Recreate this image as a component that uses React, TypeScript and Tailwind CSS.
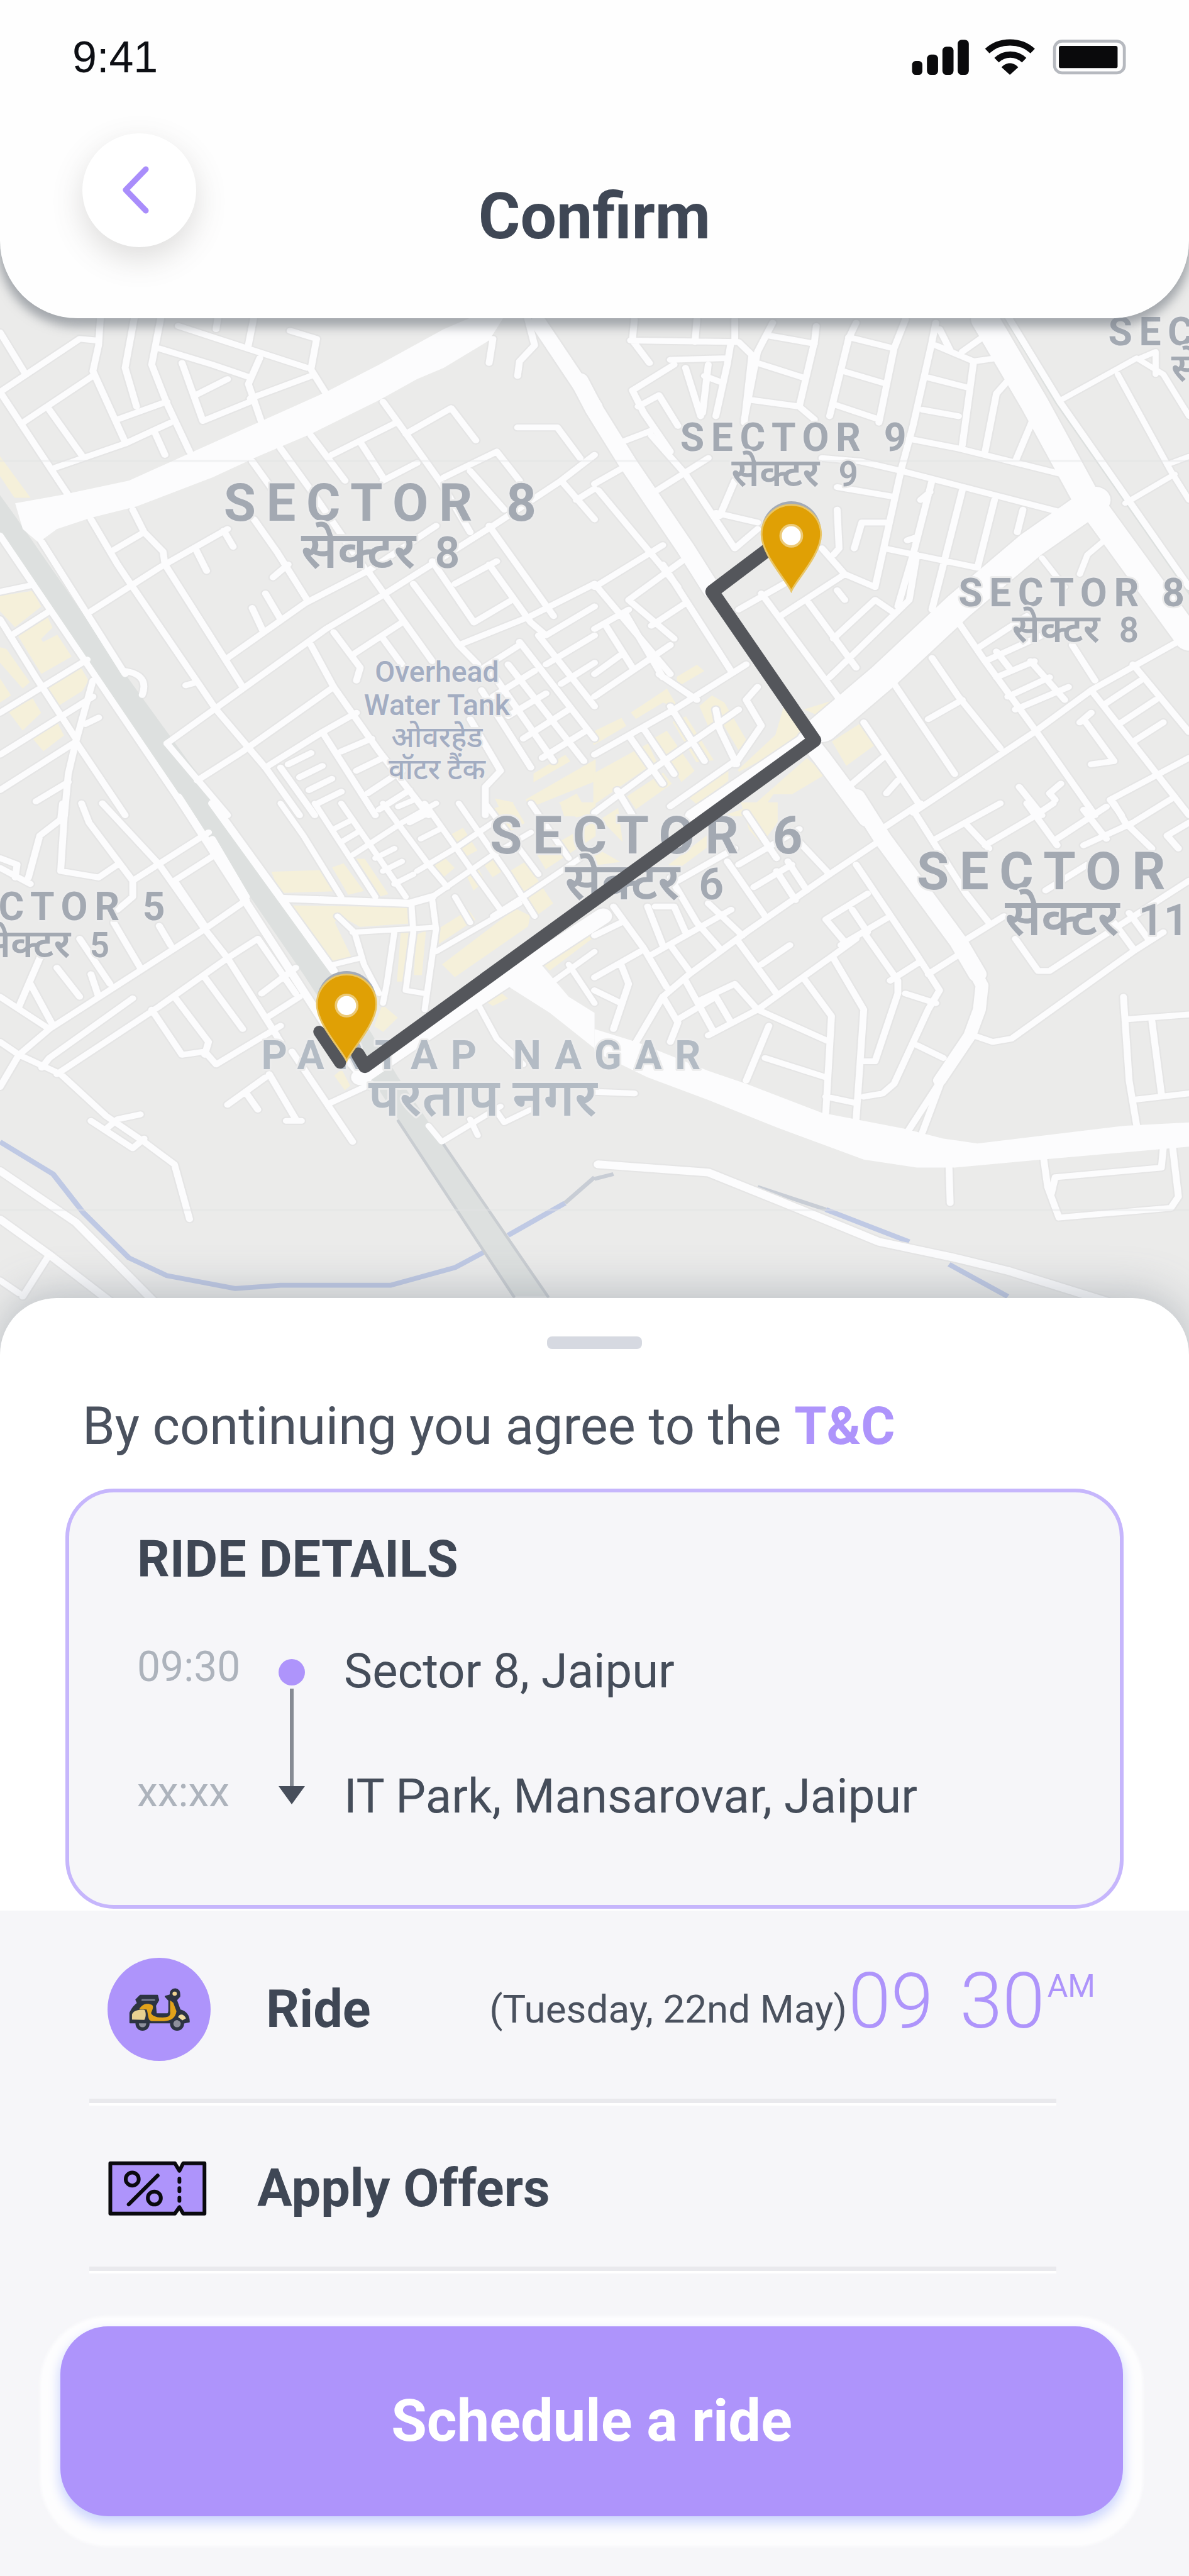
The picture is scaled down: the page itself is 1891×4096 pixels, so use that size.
type Road = { w: number; d: string };
type Tile = {
  id: string;
  x: number;
  y: number;
  parks: string;
  rail?: string;
  railEdges?: string;
  highways: string;
  roads: Road[];
  river?: string;
  stream?: string;
};

/* Each tile covers 1000 x 850 map units and is drawn on a 1568 x 1568 grid. */
const tiles: Tile[] = [
  {
    id: "nw",
    x: 0,
    y: 520,
    parks:
      "M0 460L75 580L40 580L0 510Z M0 890L85 875L105 920L40 980L0 930Z M50 1010L125 960L135 985L105 1020L112 1035L150 1012L185 1075L110 1125Z M0 1050L15 1055L75 1155L60 1170L0 1090Z M105 1175L210 1110L230 1150L215 1180L140 1235Z M25 1245L85 1210L105 1250L60 1300Z M90 1330L150 1285L165 1320L115 1365Z M0 1150L25 1195L0 1215Z M1390 1520L1568 1400L1568 1460L1400 1540Z M1410 1440L1490 1385L1500 1400L1410 1460Z M1310 1520L1350 1530L1330 1568Z M1480 1530L1520 1505L1550 1568L1490 1568Z",
    rail: "M0 575L40 640L330 1130L600 1568L510 1568L20 720L0 690Z",
    highways:
      "M40 600L160 575L340 530L500 445L680 350L860 255L1000 170L1170 60L1250 20L1330 20L1290 95L1170 180L1100 215L1000 280L820 385L680 455L560 520L360 610L240 645L150 680L110 715L125 745L60 680Z",
    roads: [
      { w: 44, d: "M1420 40L1568 300" },
      {
        w: 20,
        d: "M0 700L500 1568 M110 720L330 1130 M0 70L65 195 M0 255L210 90L255 95 M0 255L180 575 M60 350L245 205 M265 20L260 110L245 190L330 410 M130 310L215 450 M145 490L330 415L450 350 M355 20L330 180L360 300 M425 20L400 170L440 290L500 440 M310 340L440 285 M410 385L435 450 M420 120L560 170L660 210 M480 165L535 345L660 285 M515 265L600 215 M470 50L600 100L810 180 M575 20L570 60 M670 20L655 110 M765 65L835 90L820 185L860 260 M685 150L655 230L690 350 M660 275L820 205 M1300 90L1290 165 M1365 205L1370 160L1410 110L1390 20",
      },
      {
        w: 20,
        d: "M1365 365L1470 365L1530 460 M1010 285L1050 350L1165 540L1240 690 M875 450L1045 350 M820 390L910 530 M740 430L820 560L960 800 M665 470L720 560 M1070 385L1190 305L1255 405 M950 410L1010 520 M1010 530L1100 475 M1170 520L1310 440L1370 530 M1240 500L1330 620 M1568 450L1480 530L1300 670L1010 885L860 990L635 1180L440 1345 M1150 670L970 810L805 910L600 1080 M970 810L1140 1090 M240 650L310 790L350 860L570 1240L700 1420L790 1568 M350 620L380 690L430 750L435 790L640 1170 M300 745L380 690 M240 935L420 800L600 680 M515 740L545 810 M590 685L615 735 M670 650L730 750L810 900 M720 830L760 790 M700 880L740 960 M665 925L695 1000 M490 1165L520 1155 M520 1460L640 1370L880 1170",
      },
      {
        w: 20,
        d: "M820 1040L880 1170L1000 1370L1130 1568 M880 1000L950 1110L940 1150 M930 1070L1060 970 M1010 1020L1060 1100 M1090 850L1210 1040L1260 1100 M1140 780L1250 970 M1200 850L1310 780 M1290 670L1460 950 M1290 790L1400 970 M1210 1040L1400 950L1568 850 M1250 970L1350 900 M1480 530L1568 650 M1520 590L1568 555 M1400 970L1440 1010L1568 920 M1370 1030L1568 1330 M1420 1010L1568 1230 M1250 1130L1370 1040 M1440 1100L1568 1010 M1480 1160L1568 1095 M1340 1100L1540 1400 M1300 1130L1460 1400 M1270 1180L1400 1420 M1300 1200L1410 1120 M1340 1260L1440 1190 M1380 1330L1500 1240 M1430 1390L1540 1310 M1280 1568L1280 1480L1320 1430L1240 1270 M700 1420L850 1310L940 1250 M850 1310L990 1568 M740 1420L830 1568 M760 1410L820 1375 M790 1450L850 1415 M815 1490L875 1455 M840 1530L900 1495 M900 1370L980 1330 M940 1430L1010 1390 M970 1500L1060 1430 M1000 1550L1080 1490",
      },
      {
        w: 20,
        d: "M0 875L80 855 M0 960L100 1150L200 1330 M0 1250L230 1085 M30 1010L130 935 M0 1380L245 1200 M0 1490L200 1340 M245 1150L200 1340L180 1440L170 1568 M200 1340L330 1568 M95 1525L180 1465 M225 1285L260 1265 M325 1120Q395 1130 375 1195 M440 1345L600 1568",
      },
    ],
  },
  {
    id: "ne",
    x: 1000,
    y: 520,
    parks:
      "M630 1340L710 1280L735 1350L665 1410Z M0 1440L140 1350L160 1400L0 1530Z M380 1430L480 1320L500 1240L545 1310L520 1345Z M560 1240L630 1215L600 1260Z M90 1510L180 1440L200 1470L110 1545Z M280 1230L310 1200L340 1220L400 1340L380 1360L340 1280L310 1310Z M220 1140L270 1105L285 1120L220 1165Z M100 1250L190 1180L215 1230L180 1215L110 1265Z M210 1280L240 1265L310 1395L270 1400Z M160 1330L190 1310L260 1430L230 1460Z M0 1310L70 1270L80 1290L0 1345Z M240 1500L350 1420L350 1460L270 1530Z M420 1540L560 1395L605 1440L520 1500L470 1500L430 1568L350 1568Z",
    rail: "M1078 20L1100 20L1240 290L1568 850L1568 885L1215 290Z",
    highways: "",
    roads: [
      { w: 50, d: "M-40 220L0 310L90 480L240 740L310 870 M560 1330L600 1390L720 1580" },
      { w: 76, d: "M1030 30L1160 290L1290 570L1568 1020" },
      { w: 84, d: "M1320 590L1150 730L960 920L760 1140L600 1300" },
      { w: 44, d: "M600 1300L260 1570" },
      {
        w: 20,
        d: "M1090 20L1230 290L1568 860 M95 95L380 100L415 140L395 350 M105 30L100 95L145 165 M200 155L350 150 M360 100L350 170L320 330 M210 170L100 250L130 320L200 440 M240 180L280 330 M300 170L285 320 M290 205L335 225 M115 300L170 265L220 360 M270 30L265 100 M370 30L370 100 M470 40L430 130L395 340 M585 50L580 100L540 300 M690 40L670 90L620 330 M820 30L790 120L750 350 M900 40L890 100L840 360L810 490L740 860 M460 80L580 105 M430 165L550 210 M415 280L540 300L580 340 M670 85L790 120 M655 190L770 230 M635 295L750 340 M900 110L1000 160L1060 150 M910 60L940 130 M970 130L1030 80 M880 210L980 240 M865 310L960 330 M1000 160L970 420 M1090 220L1060 260L1030 440 M1160 330L1110 470 M830 400L960 430L1250 515 M600 460L700 470L810 500L1220 625 M640 550L790 580",
      },
      {
        w: 20,
        d: "M885 565L860 590 M890 530L840 760L800 920 M970 560L890 930 M1055 590L1010 800 M1130 620L1115 690 M765 740L1010 800 M640 620L645 740L630 760 M685 740L705 660L770 660 M825 715L850 705 M0 540L90 480 M50 420L150 375 M150 390L240 510L370 740 M165 560L300 460 M320 630L430 660 M330 640L370 530 M370 740L430 680 M490 950L660 820L740 860 M600 740L660 820 M380 930L500 850 M440 880L660 1230 M565 910L690 1110 M620 1140L830 900L850 760 M740 900L790 940 M630 1020L740 900 M640 870L660 900 M0 860L180 730 M10 560L180 800L220 860 M0 850L200 1130 M90 900L230 780 M90 900L210 1020 M150 980L240 910 M180 790L360 1120 M0 990L90 930 M30 980L100 1110 M80 940L180 1140 M0 1130L70 1070 M0 1200L200 1040 M0 1380L210 1240L400 1100 M170 1130L270 1210 M200 1230L290 1400 M90 1320L180 1470 M0 1560L160 1420L380 1240 M430 1170L400 1210L440 1290L370 1410 M320 1240L330 1300L375 1410 M130 1300L210 1440 M60 1490L100 1568 M370 1400L200 1540",
      },
      {
        w: 20,
        d: "M960 970L1030 1090L1160 1300L1320 1568 M890 1080L960 1200L1070 1360 M790 1160L950 1440 M880 1270L970 1210 M840 1560L1160 1310L1310 1180L1568 1010 M680 1470L760 1390 M710 1280L860 1540 M770 1500L800 1460 M1010 1050L1140 950 M1030 1090L1180 1010 M1060 1140L1160 1090 M1090 1200L1200 1140 M1110 1240L1250 1170 M1060 1060L1100 1120 M1150 1090L1240 1210 M1260 1040L1320 1150 M1310 1180L1568 1568 M1420 1100L1568 1310 M1350 1220L1440 1150 M1390 1280L1480 1210 M1420 1340L1500 1280 M1290 1270L1370 1400L1310 1410 M1280 1280L1310 1250 M1120 1480L1180 1568 M1230 1470L1200 1500L1215 1520 M1360 1520L1568 1390 M1360 1520L1390 1568",
      },
      {
        w: 18,
        d: "M1230 280L1430 150L1500 200L1568 330 M1380 200L1520 500L1568 590 M1400 600L1530 510 M1440 150L1480 130L1480 200 M1510 480L1568 455 M1180 770L1240 860 M1350 710L1300 760L1280 820",
      },
    ],
  },
  {
    id: "sw",
    x: 0,
    y: 1350,
    parks:
      "M720 215L845 210L875 270L740 275Z M775 320L1080 325L1075 370L950 380L890 340L880 370L925 480L880 500Z M880 200L905 190L955 270L920 280Z M1170 500L1360 330L1395 350L1390 380L1200 535Z M1160 390L1235 335L1250 360L1160 430Z M1350 210L1385 185L1455 310L1420 340Z M1190 100L1220 80L1255 145L1215 170Z M1060 400L1075 400L1060 550L1050 550Z M1100 410L1120 400L1110 530L1095 530Z M1150 195L1170 170L1195 200L1170 225Z M1230 215L1255 195L1275 240L1250 265Z M1280 190L1300 170L1320 210L1300 225Z M945 175L960 175L1020 280L1005 285Z M990 690L1010 630L1045 665L1010 705Z M1420 160L1568 60L1568 100L1440 200Z M1265 600L1310 580L1335 605L1300 625Z M885 845L900 830L920 875L910 885Z M1420 480L1568 370L1568 410L1450 515Z M1300 20L1350 0L1380 60L1350 80Z M1480 0L1568 0L1568 30L1520 40Z",
    rail: "M490 0L555 0L880 520L1050 850L1160 1040L1445 1530L1350 1530L1050 980L800 530Z",
    railEdges: "M1050 985L1355 1530 M1165 1050L1445 1530",
    highways: "M1330 560L1340 530L1420 490L1500 600L1568 650L1568 760L1450 650Z",
    roads: [
      { w: 50, d: "M950 850L1200 650L1590 350" },
      { w: 24, d: "M470 -20L700 400L920 800L980 880 M560 0L880 520 M0 1140L200 1300L410 1550 M0 1290L130 1400L290 1545 M750 295L1080 310L1140 290" },
      {
        w: 20,
        d: "M0 600L130 700 M0 740L50 780L160 840L280 970L380 1050L460 1120L500 1290 M50 780L0 880 M50 780L130 700L540 390L650 300 M110 820L130 790L350 605 M150 840L420 630L600 480L680 420L780 590 M240 985L350 1070L380 1040 M280 1010L310 980L370 965 M165 0L160 50L105 100L75 230 M170 30L160 210L260 230L310 190 M215 0L235 60L350 240L350 290L310 330 M270 0L420 190L540 390L600 480L740 740 M0 170L45 190L40 230 M0 200L80 250 M350 240L550 90 M460 240L580 150 M460 240L540 380 M560 110L650 290 M420 380L450 440 M300 370L370 510 M150 510L210 600 M210 420L290 560 M240 530L260 600 M105 480L50 630 M80 560L140 690 M400 640L480 780L540 770L570 810L740 690 M460 600L550 740L540 780 M540 540L640 700 M600 480L730 720 M690 590L780 510 M710 660L790 600 M600 935L700 850 M650 900L680 950 M710 840L780 980 M755 985L795 985 M770 770L930 1050 M870 930L980 870 M0 1480L50 1520 M130 1400L60 1530",
      },
      {
        w: 18,
        d: "M740 0L800 100L900 290 M830 0L990 290 M880 80L930 50 M900 120L950 85 M930 160L1060 60L1150 0 M900 0L1070 290 M990 170L1040 140 M1010 210L1060 180 M1040 250L1090 220 M1010 0L1130 190L1180 260 M1050 10L1090 -10 M1080 60L1130 30 M1110 110L1160 80 M1120 0L1240 200L1320 330 M1100 210L1200 140L1300 60 M1140 290L1300 160L1400 90 M1210 0L1340 220L1410 350 M1280 0L1420 220 M1200 290L1240 370 M1400 0L1500 170 M1300 350L1380 290L1568 140 M930 400L1140 385 M890 350L935 400L960 500L1000 590 M880 500L950 480 M1040 400L1020 560L1010 620 M1085 310L1090 400L1070 580L1120 590 M1140 300L1150 390L1120 640 M1150 460L1370 310 M1250 600L1310 730L1380 810 M1450 560L1568 460 M1500 500L1568 620 M1130 1000L1165 1050L1320 940 M1300 940L1330 990L1400 950 M1240 980L1260 1030",
      },
    ],
    river:
      "M0 1050L140 1150L220 1270L340 1410L440 1465L620 1505L740 1495L1030 1495L1200 1440L1280 1390 M1340 1340L1490 1240",
    stream: "M1490 1240L1568 1160",
  },
  {
    id: "se",
    x: 1000,
    y: 1350,
    parks:
      "M390 0L480 0L480 60L440 120L410 80Z M0 340L35 345L0 390Z M200 190L300 100L300 130L220 200Z M0 140L60 180L0 190Z M20 50L60 20L70 110Z",
    highways:
      "M0 700L110 740L300 830L400 870L600 960L820 1010L920 1040L1010 1055L1400 1000L1568 990L1568 1065L1180 1105L950 1130L850 1130L710 1105L480 1005L300 920L140 850L0 770Z",
    roads: [
      { w: 50, d: "M690 -20L760 110L960 430L1010 530" },
      { w: 36, d: "M960 430L1022 565L1015 640L990 720L910 860" },
      { w: 20, d: "M930 830L825 1020 M925 830L865 1020" },
      { w: 26, d: "M10 1120L300 1145L480 1230L750 1360L950 1410L1090 1450L1350 1545" },
      {
        w: 20,
        d: "M770 70L860 0 M760 110L620 220L400 400L250 530L180 600L110 740 M840 20L980 280L1040 370 M900 110L1070 0 M980 65L1040 140 M1030 130L1160 40L1210 0 M1140 0L1220 130 M1220 110L1350 10 M1290 20L1350 110 M1370 0L1400 60L1470 140 M1290 130L1420 60L1530 -20 M1568 60L1510 100L1540 140 M1190 270L1300 190 M970 430L1080 350 M1110 420L1170 520L1200 520L1330 420L1568 240 M1000 720L1050 740L1100 730L1420 460L1500 400 M1370 370L1420 450 M1410 340L1460 420",
      },
      {
        w: 20,
        d: "M690 190L850 470L910 580L880 640L790 870L760 900L710 910 M880 530L960 470 M780 550L860 490 M630 480L710 640L690 980 M660 430L610 360L720 280 M710 400L800 550L800 590L740 800L710 800 M680 330L720 400 M650 440L780 350 M820 590L900 620 M850 750L920 790 M430 640L620 480L690 420 M550 540L625 660L610 960 M430 640L620 740 M460 690L400 860 M450 790L610 850 M610 910L690 930 M380 430L480 590 M440 500L515 440 M300 720L430 640 M280 610L370 560L430 640 M240 550L310 700 M180 600L220 680L200 740 M220 670L320 600L360 680 M50 320L130 450L190 570 M140 320L180 440 M200 230L270 370L330 450 M150 470L360 330 M200 440L250 520 M300 310L390 410 M160 320L210 320L240 400 M0 410L70 370 M0 540L120 460 M0 580L70 620 M70 500L90 560L50 700 M220 240L370 140 M350 180L450 350 M510 180L560 270 M420 260L520 190 M540 120L620 220 M480 210L530 300 M380 190L540 80 M400 30L480 170",
      },
      {
        w: 20,
        d: "M1395 600L1410 860L1430 1000 M1400 670L1568 655 M1470 675L1495 900 M1420 920L1568 900 M1500 1070L1495 1130L1215 1160L1205 1210 M1185 1105L1195 1190L1225 1285L1520 1255L1540 1220L1525 1070 M935 1130L938 1240 M0 895L105 900",
      },
    ],
    river: "M610 1260L830 1360 M935 1430L1090 1530",
    stream: "M430 1190L610 1260 M0 1165L50 1150",
  },
];

const district = "text-[88px] font-bold tracking-[0.2em]";
const sector = "text-[66px] font-bold tracking-[0.17em]";

const labels = [
  { t: "SECTOR 8", x: 648, y: 875, a: "middle", c: district },
  { t: "SECTOR 9", x: 1340, y: 757, a: "middle", c: sector },
  { t: "SECTOR 8", x: 1612, y: 1019, a: "start", c: sector },
  { t: "SEC", x: 1864, y: 580, a: "start", c: sector },
  { t: "SECTOR 6", x: 1096, y: 1434, a: "middle", c: district },
  { t: "SECTOR", x: 1542, y: 1494, a: "start", c: district },
  { t: "CTOR 5", x: 289, y: 1546, a: "end", c: sector },
] as const;

const large = { c: "text-[86px] font-semibold", n: "text-[74px]" };
const small = { c: "text-[66px] font-semibold", n: "text-[58px]" };

const hindiLabels = [
  { t: "सेक्टर", n: "8", x: 640, y: 954, a: "middle", s: large },
  { t: "सेक्टर", n: "9", x: 1337, y: 817, a: "middle", s: small },
  { t: "सेक्टर", n: "8", x: 1809, y: 1079, a: "middle", s: small },
  { t: "से", n: "", x: 1970, y: 640, a: "start", s: small },
  { t: "सेक्टर", n: "6", x: 1084, y: 1511, a: "middle", s: large },
  { t: "सेक्टर", n: "11", x: 1690, y: 1572, a: "start", s: large },
  { t: "सेक्टर", n: "5", x: 184, y: 1609, a: "end", s: small },
] as const;

const townLabels = [
  { t: "PARTAP NAGAR", x: 820, y: 1797, c: "text-[68px] font-bold tracking-[0.32em]" },
  { t: "परताप नगर", x: 812, y: 1875, c: "text-[88px] font-semibold" },
];

const poiLabels = [
  { t: "Overhead", y: 1146 },
  { t: "Water Tank", y: 1202 },
  { t: "ओवरहेड", y: 1255 },
  { t: "वॉटर टैंक", y: 1309 },
];

function Pin({ x, y }: { x: number; y: number }) {
  return (
    <g transform={`translate(${x} ${y})`}>
      <circle cx="0" cy="-101" r="50" fill="#a4abb6" />
      <path
        d="M0 0C-8 -18 -50 -62 -50 -95A50 50 0 1 1 50 -95C50 -62 8 -18 0 0Z"
        fill="#e0a005"
        stroke="#e9c566"
        strokeWidth="3"
      />
      <circle cx="0" cy="-93" r="18" fill="#ffffff" stroke="#ecca78" strokeWidth="4" />
    </g>
  );
}

function RouteMap() {
  return (
    <svg
      viewBox="0 403 2000 1874"
      role="img"
      aria-label="Route from Sector 8 to IT Park"
      className="block w-full bg-[#ebebea] font-['Roboto','Noto_Sans',sans-serif]"
    >
      {tiles.map((tile) => (
        <g key={tile.id} transform={`translate(${tile.x} ${tile.y}) scale(0.6378 0.5421)`}>
          <path d={tile.parks} fill="#f5f0da" stroke="#f5f0da" strokeWidth="6" />
          {tile.river && <path d={tile.river} fill="none" stroke="#bfc9e4" strokeWidth="15" />}
          {tile.stream && <path d={tile.stream} fill="none" stroke="#c8cdd5" strokeWidth="12" />}
        </g>
      ))}
      {tiles.map((tile) => (
        <g
          key={tile.id}
          transform={`translate(${tile.x} ${tile.y}) scale(0.6378 0.5421)`}
          fill="none"
          strokeLinecap="round"
          strokeLinejoin="round"
        >
          {tile.roads.map((road, i) => (
            <path key={i} d={road.d} stroke="#e5e5e5" strokeWidth={road.w + 6} />
          ))}
        </g>
      ))}
      {tiles.map((tile) => (
        <g
          key={tile.id}
          transform={`translate(${tile.x} ${tile.y}) scale(0.6378 0.5421)`}
          fill="none"
          strokeLinecap="round"
          strokeLinejoin="round"
        >
          {tile.rail && <path d={tile.rail} fill="#dde0df" />}
          {tile.railEdges && <path d={tile.railEdges} stroke="#c9cdd1" strokeWidth="8" />}
          <path d={tile.highways} fill="#fcfcfd" />
          {tile.roads.map((road, i) => (
            <path key={i} d={road.d} stroke="#fcfcfd" strokeWidth={road.w - 2} />
          ))}
        </g>
      ))}
      <path d="M0 774H2000M0 2034H2000" stroke="#e3e4e5" strokeWidth="4" opacity="0.4" />

      <g fill="#a3a9b2" stroke="#ececec" strokeWidth="6" strokeLinejoin="round" paintOrder="stroke">
        {labels.map((l) => (
          <text key={l.t + l.x} x={l.x} y={l.y} textAnchor={l.a} className={l.c}>
            {l.t}
          </text>
        ))}
        {hindiLabels.map((l) => (
          <text key={l.t + l.x} x={l.x} y={l.y} textAnchor={l.a} className={l.s.c}>
            {l.t}
            {l.n && (
              <tspan dx="32" className={l.s.n}>
                {l.n}
              </tspan>
            )}
          </text>
        ))}
      </g>
      <g fill="#b3bbc4" stroke="#ececec" strokeWidth="6" strokeLinejoin="round" paintOrder="stroke">
        {townLabels.map((l) => (
          <text key={l.t} x={l.x} y={l.y} textAnchor="middle" className={l.c}>
            {l.t}
          </text>
        ))}
      </g>
      <g fill="#a3adc2" stroke="#ececec" strokeWidth="6" strokeLinejoin="round" paintOrder="stroke">
        {poiLabels.map((l) => (
          <text key={l.t} x="735" y={l.y} textAnchor="middle" className="text-[49px] font-medium">
            {l.t}
          </text>
        ))}
      </g>

      <g fill="none" stroke="#54565b" strokeWidth="23" strokeLinecap="round" strokeLinejoin="round">
        <path d="M1300 917L1198 994L1370 1244L614 1792L602 1772" />
        <path d="M537 1734L572 1786" strokeWidth="20" />
      </g>
      <Pin x={1331} y={993} />
      <Pin x={583} y={1783} />
    </svg>
  );
}

function StatusIcons() {
  return (
    <svg viewBox="70 66 1084 188" className="w-[342px]" aria-hidden="true">
      <g fill="#0a0a0c">
        <rect x="75" y="180" width="52" height="70" rx="18" />
        <rect x="150" y="148" width="56" height="102" rx="20" />
        <rect x="228" y="108" width="56" height="142" rx="20" />
        <rect x="305" y="73" width="56" height="177" rx="20" />
        <path d="M568 250L526 212C548 184 588 184 610 212Z" />
        <rect x="815" y="104" width="296" height="112" rx="10" />
      </g>
      <g fill="none" stroke="#0a0a0c" strokeWidth="32">
        <path d="M454 130C515 72 622 72 683 130" />
        <path d="M501 176C540 138 600 138 640 176" />
      </g>
      <rect x="793" y="80" width="352" height="160" rx="38" fill="none" stroke="#b6b9bf" strokeWidth="15" />
    </svg>
  );
}

function ScooterIcon() {
  return (
    <svg viewBox="200 200 320 220" className="w-[101px]" aria-hidden="true">
      <circle cx="275" cy="383" r="27" fill="#8d8f9c" stroke="#2d3442" strokeWidth="17" />
      <circle cx="449" cy="383" r="27" fill="#8d8f9c" stroke="#2d3442" strokeWidth="17" />
      <path
        d="M264 240H350L356 264L340 292L344 334H402C406 330 408 326 408 318V266L390 246L416 238C412 218 426 208 440 208C458 210 464 224 462 246L446 264L464 314C492 322 510 342 510 374L480 380L444 356L414 378H212V328C222 306 238 288 250 280L242 262Z"
        fill="#2d3442"
        stroke="#2d3442"
        strokeWidth="6"
        strokeLinejoin="round"
      />
      <path d="M274 264H334" stroke="#777b8c" strokeWidth="9" strokeLinecap="round" />
      <path
        d="M258 310C274 282 300 278 322 288C336 298 320 320 318 330C326 346 346 352 374 352C404 352 418 346 414 322V266L430 278L446 320C442 352 420 368 384 370H320C300 366 306 340 296 312Z"
        fill="#e2a21a"
      />
      <path d="M222 362V336C230 316 262 310 286 314C294 330 292 350 284 364Z" fill="#e8d091" />
      <path d="M454 350C462 332 482 332 494 356L476 366Z" fill="#f0dba0" />
      <circle cx="437" cy="232" r="11" fill="#f0d492" />
    </svg>
  );
}

function TicketIcon() {
  return (
    <svg viewBox="94 1084 500 280" className="w-[157px]" aria-hidden="true">
      <g stroke="#0a0a0f" strokeWidth="19" strokeLinejoin="round" strokeLinecap="round">
        <path
          d="M105 1096H432L455 1134L474 1096H582V1351H474L455 1318L432 1351H105Z"
          fill="#ae94fb"
        />
        <path d="M455 1174V1190M455 1222V1238M455 1270V1286" fill="none" />
        <path d="M345 1158L198 1304" fill="none" />
        <circle cx="216" cy="1176" r="33" fill="none" />
        <circle cx="328" cy="1272" r="33" fill="none" />
      </g>
    </svg>
  );
}

function Divider() {
  return <hr className="mr-[211px] ml-[142px] h-[11px] border-0 border-b-[4px] border-white bg-[#e9e9ed]" />;
}

export default function App() {
  return (
    <main className="w-full bg-[#f6f6f9] font-['Roboto','Noto_Sans',sans-serif] text-[#3f4755]">
      <header className="relative z-10 rounded-b-[123px] bg-[#fefefe] pt-[56px] pb-[112px] shadow-[0_10px_16px_4px_rgba(120,126,134,0.62)]">
        <div className="flex items-center justify-between pr-[100px] pl-[115px]">
          <span className="font-['Liberation_Sans',sans-serif] text-[70px] leading-[70px] text-[#0d0f14]">
            9:41
          </span>
          <StatusIcons />
        </div>
        <div className="mt-[86px] grid grid-cols-[1fr_auto_1fr] items-start px-[131px]">
          <button
            type="button"
            aria-label="Back"
            className="flex size-[181px] items-center justify-center rounded-full bg-white shadow-[0_18px_50px_rgba(90,85,80,0.2)]"
          >
            <svg viewBox="0 0 60 90" className="mr-3 w-[60px]" aria-hidden="true">
              <path
                d="M46 11L14 44L46 77"
                fill="none"
                stroke="#a98dfb"
                strokeWidth="9"
                strokeLinecap="round"
                strokeLinejoin="round"
              />
            </svg>
          </button>
          <h1 className="mt-[82px] text-[102px] leading-[100px] font-bold">Confirm</h1>
        </div>
      </header>

      <div className="-mt-[124px]">
        <RouteMap />
      </div>

      <section className="relative -mt-[90px] rounded-t-[90px] bg-white px-[104px] pt-[61px] pb-[6px] shadow-[0_-6px_70px_rgba(110,122,135,0.42)]">
        <div className="mx-auto h-5 w-[151px] rounded-lg bg-[#d6d9e1]" />
        <p className="mt-[75px] ml-[27px] text-[83px] leading-[96px] text-[#4a515e]">
          By continuing you agree to the{" "}
          <a href="#terms" className="font-bold text-[#ae94fb]">
            T&amp;C
          </a>
        </p>

        <div className="mt-[51px] rounded-[77px] border-[6px] border-[#c6b6fc] bg-[#f6f6f9] pt-[59px] pb-[124px] pl-[108px]">
          <h2 className="text-[81px] leading-[96px] font-bold">RIDE DETAILS</h2>
          <div className="mt-20 grid grid-cols-[224px_105px_1fr] items-start">
            <div className="flex flex-col gap-[113px] text-[66px] leading-[86px] text-[#adb3bc]">
              <time>09:30</time>
              <span>xx:xx</span>
            </div>
            <svg viewBox="0 0 44 232" className="mt-[30px] w-11" aria-hidden="true">
              <circle cx="22" cy="21" r="21" fill="#ae94fb" />
              <path d="M22 47V206" stroke="#868b94" strokeWidth="6" />
              <path d="M1 202H43L22 231Z" fill="#474e5b" />
            </svg>
            <div className="flex flex-col gap-[101px] text-[76px] leading-[98px] text-[#454d5a]">
              <span>Sector 8, Jaipur</span>
              <span>IT Park, Mansarovar, Jaipur</span>
            </div>
          </div>
        </div>
      </section>

      <section className="relative -mt-[3px] bg-[#f6f6f9] pt-[75px] pb-[95px]">
        <div className="flex items-center pr-[149px] pl-[171px]">
          <div className="flex size-[164px] items-center justify-center rounded-full bg-[#ae94fb]">
            <ScooterIcon />
          </div>
          <span className="ml-[88px] text-[83px] leading-[96px] font-bold">Ride</span>
          <span className="ml-auto text-[62px] leading-[96px] text-[#4a515e]">(Tuesday, 22nd May)</span>
          <time className="ml-[2px] flex items-start self-start text-[#ae94fb]">
            <span className="text-[122px] leading-[140px] font-light">09</span>
            <span className="ml-[42px] text-[122px] leading-[140px] font-light">30</span>
            <span className="ml-1 text-[50px] leading-[90px]">AM</span>
          </time>
        </div>
        <div className="mt-[60px]">
          <Divider />
        </div>
        <button type="button" className="mt-[84px] flex items-center gap-[80px] pl-[172px]">
          <TicketIcon />
          <span className="text-[83px] leading-[96px] font-bold">Apply Offers</span>
        </button>
        <div className="mt-[76px]">
          <Divider />
        </div>
        <div className="mt-[84px] pr-[105px] pl-[96px]">
          <button
            type="button"
            className="h-[302px] w-full rounded-[76px] bg-[#ae94fb] text-[92px] leading-[96px] font-bold text-white shadow-[0_10px_18px_2px_#cdd6fd,0_16px_4px_32px_#fdfdfe]"
          >
            Schedule a ride
          </button>
        </div>
      </section>
    </main>
  );
}
